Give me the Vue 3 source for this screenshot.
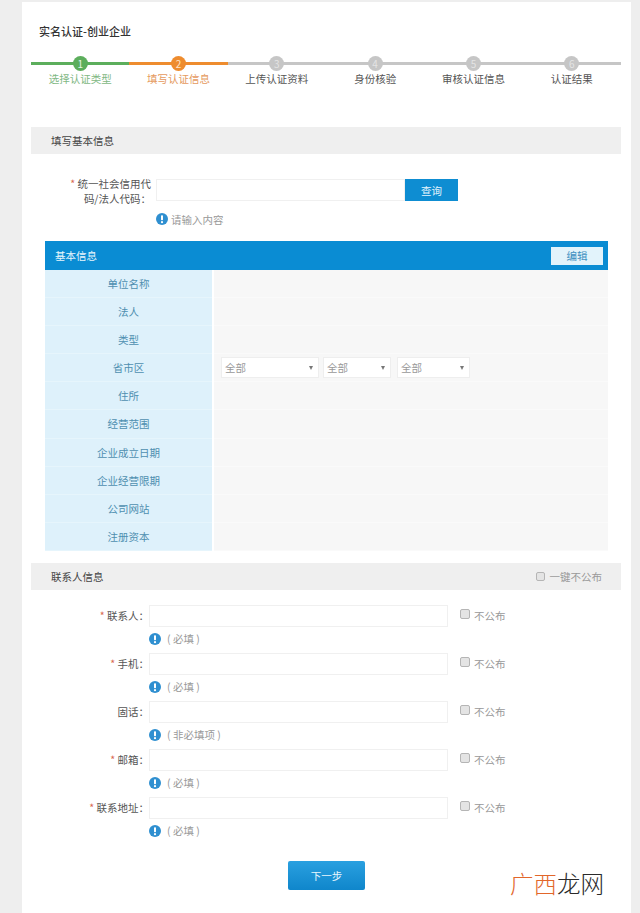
<template>
  <div class="page">
    <div class="card">
      <h1 class="title">实名认证-创业企业</h1>

      <div class="steps">
        <div v-for="(s, i) in steps" :key="s" class="step" :class="stepClass(i)">
          <span class="step-num">{{ i + 1 }}</span>
          <span class="step-name">{{ s }}</span>
        </div>
      </div>

      <div class="section-bar first">填写基本信息</div>

      <div class="code-row">
        <label class="code-label"><i class="star">*</i> 统一社会信用代<br />码/法人代码：</label>
        <input class="text-input code-input" type="text" />
        <button class="query-btn">查询</button>
      </div>
      <div class="code-hint">
        <svg class="tip" viewBox="0 0 12 12"><circle cx="6" cy="6" r="6" fill="#2f8fd0" /><rect x="5" y="2.2" width="2" height="5" rx="0.8" fill="#fff" /><circle cx="6" cy="9.2" r="1.1" fill="#fff" /></svg>
        <span>请输入内容</span>
      </div>

      <div class="info">
        <div class="info-head">
          <span>基本信息</span>
          <button class="edit-btn">编辑</button>
        </div>
        <div v-for="f in fields" :key="f" class="info-row">
          <div class="info-key">{{ f }}</div>
          <div class="info-val">
            <template v-if="f === '省市区'">
              <div v-for="w in selects" :key="w" class="sel" :class="w">
                <span>全部</span>
                <em class="arrow"></em>
              </div>
            </template>
          </div>
        </div>
      </div>

      <div class="section-bar contact-bar">
        <span>联系人信息</span>
        <span class="all-private"><i class="check small"></i>一键不公布</span>
      </div>

      <div class="contacts">
        <div v-for="c in contacts" :key="c.label" class="contact">
          <div class="contact-row">
            <label class="contact-label"><i v-if="c.required" class="star">*</i> {{ c.label }}：</label>
            <input class="text-input contact-input" type="text" />
            <span class="private"><i class="check"></i>不公布</span>
          </div>
          <div class="contact-hint">
            <svg class="tip" viewBox="0 0 12 12"><circle cx="6" cy="6" r="6" fill="#2f8fd0" /><rect x="5" y="2.2" width="2" height="5" rx="0.8" fill="#fff" /><circle cx="6" cy="9.2" r="1.1" fill="#fff" /></svg>
            <span>( {{ c.hint }} )</span>
          </div>
        </div>
      </div>

      <div class="next-wrap">
        <button class="next-btn">下一步</button>
        <div class="mark"><b>广西</b>龙网</div>
      </div>
    </div>
  </div>
</template>

<script setup>
const steps = ["选择认证类型", "填写认证信息", "上传认证资料", "身份核验", "审核认证信息", "认证结果"];

const fields = ["单位名称", "法人", "类型", "省市区", "住所", "经营范围", "企业成立日期", "企业经营限期", "公司网站", "注册资本"];

const selects = ["wide", "narrow", "mid"];

const contacts = [
  { label: "联系人", required: true, hint: "必填" },
  { label: "手机", required: true, hint: "必填" },
  { label: "固话", required: false, hint: "非必填项" },
  { label: "邮箱", required: true, hint: "必填" },
  { label: "联系地址", required: true, hint: "必填" },
];

function stepClass(i) {
  if (i === 0) return "done";
  if (i === 1) return "current";
  return "";
}
</script>

<style>
html,
body {
  margin: 0;
  background: #eeeeee;
}
</style>

<style scoped>
.page {
  height: 913px;
  overflow: hidden;
  padding: 2px 9px 0 22px;
  box-sizing: border-box;
  font-family: "Noto Sans CJK SC", sans-serif;
  font-size: 10.5px;
  color: #555;
}

.card {
  background: #fff;
  height: 911px;
  padding: 0 10px 0 9px;
  box-sizing: border-box;
}

.title {
  margin: 0;
  padding: 21px 0 0 8px;
  font-size: 11px;
  line-height: 16px;
  font-weight: 500;
  color: #333;
}

.steps {
  display: flex;
  margin-top: 17px;
}

.step {
  flex: 1;
  display: flex;
  flex-direction: column;
  align-items: center;
  position: relative;
  color: #555;
}

.step::before {
  content: "";
  position: absolute;
  left: 0;
  right: 0;
  top: 6px;
  height: 3px;
  background: #c6c6c6;
}

.step-num {
  position: relative;
  width: 15px;
  height: 15px;
  line-height: 15px;
  border-radius: 50%;
  background: #c6c6c6;
  color: #e4e4e4;
  font-size: 10px;
  text-align: center;
}

.step-name {
  line-height: 14px;
  margin-top: 1px;
}

.step.done::before,
.step.done .step-num {
  background: #5cae5c;
}

.step.done .step-num {
  color: #e4f4e4;
}

.step.done .step-name {
  color: #7fb884;
}

.step.current::before,
.step.current .step-num {
  background: #ee8c2e;
}

.step.current .step-num {
  color: #fde5c9;
}

.step.current .step-name {
  color: #e59a5e;
}

.section-bar {
  height: 27px;
  line-height: 27px;
  background: #efefef;
  padding-left: 20px;
  color: #444;
}

.section-bar.first {
  margin-top: 41px;
}

.code-row {
  display: flex;
  align-items: flex-start;
  margin-top: 25px;
}

.code-label {
  width: 120px;
  margin: -3px 5px 0 0;
  text-align: right;
  line-height: 15px;
  color: #555;
  flex-shrink: 0;
}

.star {
  color: #d9694f;
  font-style: normal;
}

.text-input {
  display: block;
  height: 22px;
  margin: 0;
  padding: 0;
  border: 1px solid #f0f0f0;
  box-sizing: border-box;
  background: #fff;
  outline: none;
}

.code-input {
  width: 249px;
}

.query-btn {
  width: 53px;
  height: 22px;
  padding: 0;
  border: none;
  background: #0e8dd2;
  color: #e6f5fd;
  font: inherit;
}

.code-hint {
  display: flex;
  align-items: center;
  height: 16px;
  margin: 5px 0 0 125px;
  color: #999;
}

.tip {
  width: 12px;
  height: 12px;
  flex-shrink: 0;
}

.code-hint span {
  margin-left: 3px;
}

.info {
  width: 563px;
  margin: 14px 0 0 14px;
}

.info-head {
  display: flex;
  align-items: center;
  justify-content: space-between;
  height: 29px;
  padding: 0 5px 0 10px;
  background: #0a8cd3;
  color: #e8f6fd;
}

.edit-btn {
  width: 52px;
  height: 18px;
  padding: 0;
  border: none;
  background: #e2f3fb;
  color: #3d8fc0;
  font: inherit;
}

.info-row {
  display: flex;
  height: 28.1px;
}

.info-key {
  width: 167px;
  line-height: 28px;
  text-align: center;
  background: #def1fb;
  border-bottom: 1px solid #e6f5fc;
  box-sizing: border-box;
  color: #4f8fb0;
}

.info-val {
  flex: 1;
  display: flex;
  align-items: center;
  margin-left: 2px;
  padding-left: 7px;
  background: #f7f7f7;
  border-bottom: 1px solid #fafafa;
  box-sizing: border-box;
}

.sel {
  display: flex;
  align-items: center;
  justify-content: space-between;
  height: 21px;
  margin-right: 4px;
  padding: 0 5px 0 3px;
  box-sizing: border-box;
  background: #fff;
  border: 1px solid #eeeeee;
  color: #999;
}

.sel.wide {
  width: 98px;
}

.sel.narrow {
  width: 68px;
  margin-right: 6px;
}

.sel.mid {
  width: 73px;
}

.arrow {
  width: 0;
  height: 0;
  border-left: 2.5px solid transparent;
  border-right: 2.5px solid transparent;
  border-top: 4px solid #777;
}

.contact-bar {
  display: flex;
  justify-content: space-between;
  margin-top: 12px;
  padding-right: 19px;
}

.all-private {
  display: flex;
  align-items: center;
  color: #999;
}

.check {
  display: block;
  width: 10px;
  height: 10px;
  margin-right: 4px;
  box-sizing: border-box;
  border: 1px solid #b5b5b5;
  border-radius: 2px;
  background: #e4e4e4;
  flex-shrink: 0;
}

.check.small {
  width: 9px;
  height: 9px;
  margin-right: 5px;
}

.contacts {
  padding-top: 15px;
}

.contact {
  height: 48px;
}

.contact-row {
  display: flex;
  align-items: center;
  height: 22px;
}

.contact-label {
  width: 118px;
  text-align: right;
  color: #555;
  flex-shrink: 0;
}

.contact-input {
  width: 299px;
}

.private {
  display: flex;
  align-items: center;
  margin-left: 12px;
  color: #999;
}

.private .check {
  margin-top: -4px;
}

.contact-hint {
  display: flex;
  align-items: center;
  height: 16px;
  margin: 4px 0 0 118px;
  color: #999;
}

.contact-hint span {
  margin-left: 6px;
}

.next-wrap {
  display: flex;
  margin-top: 16px;
  position: relative;
}

.next-btn {
  width: 77px;
  height: 29px;
  margin-left: 257px;
  padding: 0;
  border: none;
  border-radius: 2px;
  background: linear-gradient(#2aa0e0, #0f86cb);
  color: #e8f6fd;
  font: inherit;
}

.mark {
  position: absolute;
  left: 479px;
  top: 7px;
  font-size: 23.5px;
  line-height: 30px;
  font-weight: 300;
  color: #2a2a2a;
  white-space: nowrap;
}

.mark b {
  font-weight: 300;
  color: #e2662a;
}
</style>
